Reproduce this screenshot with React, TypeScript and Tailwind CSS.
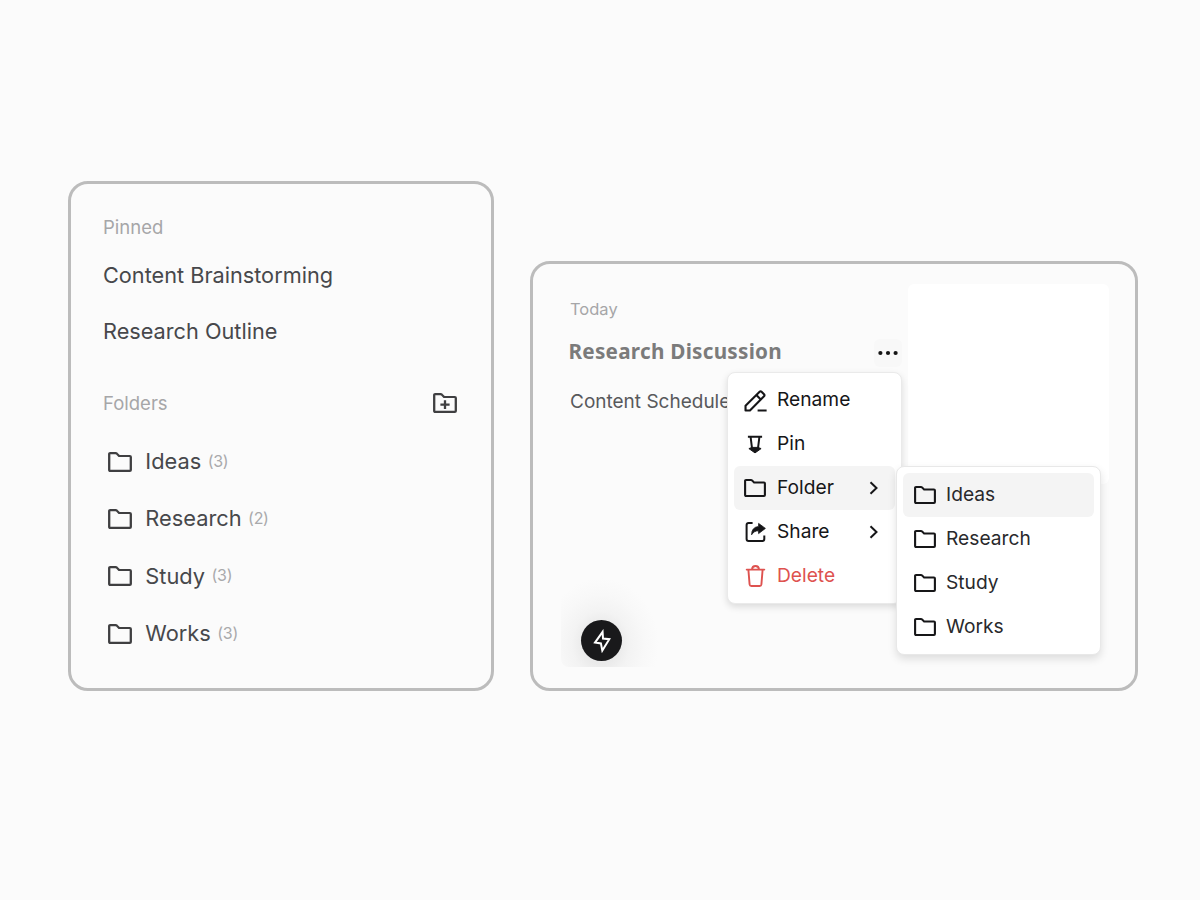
import React from "react";

function FolderIcon({ className = "", plus = false }: { className?: string; plus?: boolean }) {
  return (
    <svg viewBox="0 0 24 21" fill="none" stroke="currentColor" strokeWidth="2.3" strokeLinejoin="round" strokeLinecap="round" preserveAspectRatio="none" className={`shrink-0 overflow-visible ${className}`}>
      <path d="M1.2 2.2Q1.2 1.2 2.2 1.2H7.6Q8.3 1.2 8.8 1.7L11.1 4.2H21.8Q22.8 4.2 22.8 5.2V18.8Q22.8 19.8 21.8 19.8H2.2Q1.2 19.8 1.2 18.8Z" />
      {plus && <path d="M12 7.7V16.7M7.4 12.2H16.6" strokeLinecap="butt" />}
    </svg>
  );
}

function RenameIcon() {
  return (
    <svg viewBox="0 0 24 24" fill="none" stroke="currentColor" strokeWidth="2.2" strokeLinejoin="round" className="-ml-px h-[23px] w-[23px] shrink-0">
      <path d="M1.6 22.4V17.6L16.3 2.9Q17.3 1.9 18.3 2.9L20.9 5.5Q21.9 6.5 20.9 7.5L6.2 22.4Z" />
      <path d="M12.9 6.3L17.5 10.9M14.2 22.5H23.6" />
    </svg>
  );
}

function PinIcon() {
  return (
    <svg viewBox="0 0 22 22" fill="none" stroke="currentColor" strokeWidth="2" className="-ml-px h-[22px] w-[22px]">
      <path d="M3.9 2.8H18.1M6.6 2.8L8.1 15M15.4 2.8L13.9 15" />
      <path d="M4.9 14.6L8.1 13.4H13.9L17.1 14.6L11 18.9Z" fill="currentColor" strokeWidth="1" strokeLinejoin="round" />
    </svg>
  );
}

function ShareIcon() {
  return (
    <svg viewBox="0 0 22 22" fill="none" stroke="currentColor" strokeWidth="2" className="-mt-px h-[22px] w-[22px]">
      <path d="M7.6 2H3.6Q1.6 2 1.6 4V18Q1.6 20 3.6 20H17.3Q19.3 20 19.3 18V14.5" />
      <path d="M13.6 2.4L20.4 7.4L13.6 12.6V9.8Q9 9.7 6.6 13.8Q6.4 6.4 13.6 5.4Z" fill="currentColor" strokeWidth=".8" strokeLinejoin="round" />
    </svg>
  );
}

function TrashIcon() {
  return (
    <svg viewBox="0 0 22 24" fill="none" stroke="currentColor" strokeWidth="1.9" strokeLinejoin="round" strokeLinecap="round" className="-mt-px h-[24px] w-[22px]">
      <path d="M1.7 5.6H19.3M7 5.4Q7.2 2 10.5 2T14 5.4M3.4 5.8L4.6 20.4Q4.8 22 6.3 22H14.7Q16.2 22 16.4 20.4L17.6 5.8" />
    </svg>
  );
}

function Chevron() {
  return (
    <svg viewBox="0 0 10 14" fill="none" stroke="currentColor" strokeWidth="2" className="ml-auto h-3.5 w-2.5">
      <path d="M1.5 1.2L7.5 7L1.5 12.8" />
    </svg>
  );
}

function FolderRow({ name, count }: { name: string; count: number }) {
  return (
    <li className="flex h-[57.3px] items-center pl-[5px] text-[21.8px] text-[#47484b]">
      <FolderIcon className="mt-px h-[20px] w-6 text-[#3f3f41]" />
      <span className="ml-[13.3px]">{name}</span>
      <span className="-mt-px ml-[6.5px] text-[16px] tracking-[-0.3px] text-[#a9a9ab]">({count})</span>
    </li>
  );
}

function MenuItem({ icon, label, arrow, className = "" }: { icon: React.ReactNode; label: string; arrow?: boolean; className?: string }) {
  return (
    <li className={`flex h-11 items-center pl-[11px] pr-4 ${className}`}>
      <span className="flex w-[22px] items-center pt-px">{icon}</span>
      <span className="-mt-px ml-[10px]">{label}</span>
      {arrow && <Chevron />}
    </li>
  );
}

const folders = [
  { name: "Ideas", count: 3 },
  { name: "Research", count: 2 },
  { name: "Study", count: 3 },
  { name: "Works", count: 3 },
];

export default function App() {
  return (
    <main className="flex h-[900px] w-[1200px] items-end gap-[36px] overflow-hidden bg-[#fbfbfb] pb-[209px] pl-[68px] font-['Inter',sans-serif] whitespace-nowrap">
      <section className="h-[510px] w-[426px] rounded-[20px] border-[3px] border-[#bcbcbc] pt-[24px] pr-[34px] pl-[32px]">
        <h2 className="flex h-10 items-center text-[18.5px] text-[#a6a6a8]">Pinned</h2>
        <p className="flex h-[55px] items-center text-[21.7px] text-[#47484b]">Content Brainstorming</p>
        <p className="flex h-[56px] items-center text-[21.7px] text-[#47484b]">Research Outline</p>
        <div className="mt-[25px] flex h-10 items-center justify-between">
          <h2 className="text-[18.5px] text-[#a6a6a8]">Folders</h2>
          <FolderIcon plus className="-mt-[2px] h-[20px] w-6 text-[#3f3f41]" />
        </div>
        <ul className="mt-[8.7px]">
          {folders.map((f) => <FolderRow key={f.name} {...f} />)}
        </ul>
      </section>

      <section className="relative h-[430px] w-[608px] rounded-[20px] border-[3px] border-[#bcbcbc] pt-[25px] pl-[37px]">
        <h2 className="flex h-10 items-center text-[16.5px] text-[#a6a6a8]">Today</h2>
        <p className="-ml-[1.5px] flex h-[45px] items-center font-['Noto_Sans',sans-serif] text-[20.7px] font-bold tracking-[0.26px] text-[#7b7b7b]">Research Discussion</p>
        <p className="flex h-[57px] items-center text-[19px] text-[#58595c]">Content Schedule</p>

        <div className="absolute top-[20px] left-[375px] h-[200px] w-[201px] rounded-md bg-white" />

        <div className="absolute top-[75px] left-[341px] flex h-7 w-7 items-center justify-center rounded-md bg-[#f8f8f8] text-[#151515]">
          <svg viewBox="0 0 20 6" fill="currentColor" className="h-1.5 w-5">
            <circle cx="2.4" cy="3" r="2.1" />
            <circle cx="10" cy="3" r="2.1" />
            <circle cx="17.6" cy="3" r="2.1" />
          </svg>
        </div>

        <div className="absolute top-[310px] left-[28px] h-[93px] w-[100px] rounded-bl-lg bg-[radial-gradient(ellipse_58px_66px_at_40px_70px,#eaeaea_30%,#f3f3f3_50%,#f8f8f8_75%,#fbfbfb_100%)]" />
        <div className="absolute top-[356px] left-[48px] flex h-[41px] w-[41px] items-center justify-center rounded-full bg-[#19191b] text-white">
          <svg viewBox="0 0 18 24" fill="none" stroke="currentColor" strokeWidth="2" strokeLinejoin="miter" className="h-6 w-[18px]">
            <path d="M9.6 2.8L2 13.6L7.9 14.4L9.3 21.6L16.3 10.2L10 9.6Z" />
          </svg>
        </div>

        <ul className="absolute top-[108px] left-[194px] h-[232px] w-[175px] rounded-lg border border-[#eaeaea] bg-white px-[6px] pt-[5px] text-[19.2px] text-[#161618] shadow-[0_3px_7px_rgba(0,0,0,0.13)]">
          <MenuItem icon={<RenameIcon />} label="Rename" />
          <MenuItem icon={<PinIcon />} label="Pin" />
          <MenuItem icon={<FolderIcon className="-ml-px -mt-px h-[18px] w-[22px]" />} label="Folder" arrow className="rounded-md bg-[#f4f4f4]" />
          <MenuItem icon={<ShareIcon />} label="Share" arrow />
          <MenuItem icon={<TrashIcon />} label="Delete" className="text-[#de524f]" />
        </ul>

        <ul className="absolute top-[202px] left-[363px] h-[189px] w-[205px] rounded-lg border border-[#e8e8e8] bg-white p-[6px] text-[19.2px] text-[#29292c] shadow-[0_4px_9px_rgba(0,0,0,0.12)]">
          {folders.map((f, i) => (
            <MenuItem
              key={f.name}
              icon={<FolderIcon className="-mt-px h-[18px] w-[22px] text-[#161618]" />}
              label={f.name}
              className={i === 0 ? "rounded-md bg-[#f4f4f4]" : ""}
            />
          ))}
        </ul>
      </section>
    </main>
  );
}
